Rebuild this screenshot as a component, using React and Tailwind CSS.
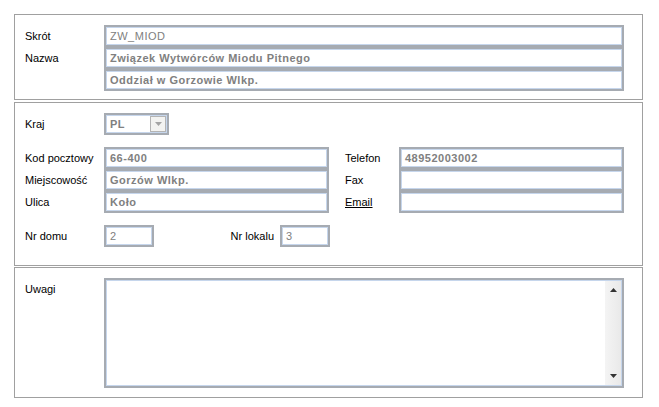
const font = "font-['Liberation_Sans',Arial,sans-serif]";

const Field = ({ value, bold = true, className = '' }) => (
  <div
    className={`h-[22px] border-2 border-[#a6abb2] shadow-[inset_0_0_0_1px_#c6d6ec] bg-white flex items-center pl-[4px] text-[11px] text-[#808080] tracking-[0.5px] ${bold ? 'font-bold' : ''} ${className}`}
  >
    {value}
  </div>
);

const Label = ({ children, className = '' }) => (
  <div className={`h-[22px] flex items-center text-[11px] text-black ${className}`}>{children}</div>
);

const Panel = ({ children, className = '' }) => (
  <div className={`w-[629px] border border-[#a0a0a0] bg-white pl-[10px] pt-[10px] ${className}`}>{children}</div>
);

const App = () => {
  return (
    <div className={`w-[659px] h-[407px] bg-white pl-[14px] pt-[14px] ${font}`}>
      {/* nazwa */}
      <Panel className="h-[86px]">
        <div className="grid grid-cols-[79px_520px]">
          <Label>Skrót</Label>
          <Field value="ZW_MIOD" bold={false} />
          <Label>Nazwa</Label>
          <Field value="Związek Wytwórców Miodu Pitnego" />
          <div />
          <Field value="Oddział w Gorzowie Wlkp." />
        </div>
      </Panel>

      {/* adres */}
      <Panel className="h-[164px] mt-[2px]">
        <div className="flex">
          <Label className="w-[79px]">Kraj</Label>
          <div className="w-[65px] h-[22px] border-2 border-[#a6abb2] shadow-[inset_0_0_0_1px_#c6d6ec] bg-white flex items-center justify-between pl-[4px] pr-[1px]">
            <span className="text-[11px] font-bold text-[#808080] tracking-[0.5px]">PL</span>
            <div className="w-[16px] h-[16px] border border-[#b4b4b4] bg-[#f3f3f1] flex items-center justify-center">
              <svg width="7" height="4" viewBox="0 0 7 4">
                <path d="M0 0h7L3.5 4z" fill="#a4a4a4" />
              </svg>
            </div>
          </div>
        </div>

        <div className="flex mt-[12px]">
          <div className="grid grid-cols-[79px_225px]">
            <Label>Kod pocztowy</Label>
            <Field value="66-400" />
            <Label>Miejscowość</Label>
            <Field value="Gorzów Wlkp." />
            <Label>Ulica</Label>
            <Field value="Koło" />
          </div>
          <div className="grid grid-cols-[54px_225px] ml-[16px]">
            <Label>Telefon</Label>
            <Field value="48952003002" />
            <Label>Fax</Label>
            <Field value="" />
            <Label className="underline">Email</Label>
            <Field value="" />
          </div>
        </div>

        <div className="flex items-center mt-[12px]">
          <Label className="w-[79px] h-[20px]">Nr domu</Label>
          <Field value="2" bold={false} className="w-[50px] h-[20px]" />
          <Label className="w-[126px] h-[20px] justify-end pr-[6px]">Nr lokalu</Label>
          <Field value="3" bold={false} className="w-[50px] h-[20px]" />
        </div>
      </Panel>

      {/* uwagi */}
      <Panel className="h-[131px] mt-[1px]">
        <div className="flex">
          <Label className="w-[79px] self-start">Uwagi</Label>
          <div className="w-[520px] h-[110px] border-2 border-[#a6abb2] shadow-[inset_0_0_0_1px_#c6d6ec] bg-white flex justify-end p-[1px]">
            <div className="w-[16px] h-full bg-gradient-to-r from-[#f4f4f4] to-[#e9e9e9] flex flex-col items-center justify-between py-[7px]">
              <svg width="7" height="4" viewBox="0 0 7 4">
                <path d="M3.5 0L7 4H0z" fill="#333" />
              </svg>
              <svg width="7" height="4" viewBox="0 0 7 4">
                <path d="M0 0h7L3.5 4z" fill="#333" />
              </svg>
            </div>
          </div>
        </div>
      </Panel>
    </div>
  );
};

export default App;
